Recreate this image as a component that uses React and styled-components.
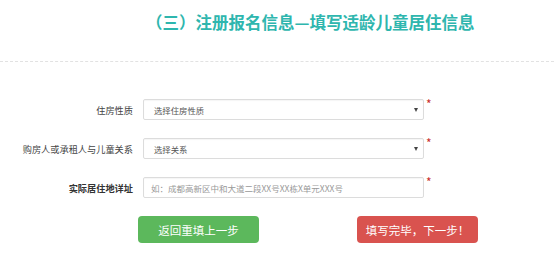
import React from 'react'
import styled, { createGlobalStyle } from 'styled-components'

const GlobalStyle = createGlobalStyle`
    body {
        margin: 0;
        background: #ffffff;
        font-family: "Noto Sans CJK SC", "Noto Sans", sans-serif;
    }
`

const rows = [
    { label: '住房性质', kind: 'select', value: '选择住房性质' },
    { label: '购房人或承租人与儿童关系', kind: 'select', value: '选择关系' },
    { label: '实际居住地详址', kind: 'input', value: '如：成都高新区中和大道二段XX号XX栋X单元XXX号', bold: true },
]

const App = () => {
    return (
        <Page>
            <GlobalStyle />
            <Header>
                <Title>（三）注册报名信息—填写适龄儿童居住信息</Title>
            </Header>
            <Form>
                {rows.map((row) => (
                    <Row key={row.label}>
                        <Label bold={row.bold}>{row.label}</Label>
                        {row.kind === 'select' ? (
                            <Select>
                                <span>{row.value}</span>
                                <Caret />
                            </Select>
                        ) : (
                            <Input placeholder={row.value} />
                        )}
                        <Required>*</Required>
                    </Row>
                ))}
                <Buttons>
                    <Button color="#5cb85c">返回重填上一步</Button>
                    <Button color="#d9534f">填写完毕，下一步！</Button>
                </Buttons>
            </Form>
        </Page>
    )
}

export default App

const Page = styled.div`
    width: 554px;
    height: 256px;
    overflow: hidden;
`
const Header = styled.div`
    height: 62px;
    box-sizing: border-box;
    padding: 10px 0 0 146px;
    border-bottom: 1px dashed #e2e2e2;
`
const Title = styled.h1`
    margin: 0;
    font-size: 16.5px;
    line-height: 24px;
    font-weight: bold;
    color: #2eb6ae;
    white-space: nowrap;
`
const Form = styled.div`
    padding-top: 37px;
    display: flex;
    flex-direction: column;
    gap: 18px;
`
const Row = styled.div`
    display: grid;
    grid-template-columns: 133px 281px auto;
    column-gap: 10px;
    align-items: center;
    height: 21px;
`
const Label = styled.div`
    text-align: right;
    font-size: 9.2px;
    color: ${props => props.bold ? '#333' : '#444'};
    font-weight: ${props => props.bold ? 'bold' : 'normal'};
    white-space: nowrap;
`
const Select = styled.div`
    height: 21px;
    box-sizing: border-box;
    border: 1px solid #dcdcdc;
    border-radius: 2px;
    display: flex;
    align-items: center;
    justify-content: space-between;
    padding: 0 5px 0 10px;
    font-size: 8.4px;
    color: #555;
    box-shadow: inset 0 1px 1px rgba(0, 0, 0, 0.04);
`
const Caret = styled.span`
    width: 0;
    height: 0;
    border-left: 2.5px solid transparent;
    border-right: 2.5px solid transparent;
    border-top: 4px solid #444;
    margin-top: 1px;
`
const Input = styled.input`
    height: 21px;
    box-sizing: border-box;
    border: 1px solid #dcdcdc;
    border-radius: 2px;
    padding: 0 7px;
    font-family: inherit;
    font-size: 8.5px;
    outline: none;
    box-shadow: inset 0 1px 1px rgba(0, 0, 0, 0.04);

    &::placeholder {
        color: #999;
    }
`
const Required = styled.span`
    margin-left: -8px;
    align-self: start;
    margin-top: -1px;
    font-size: 12px;
    line-height: 12px;
    color: #c9302c;
`
const Buttons = styled.div`
    display: flex;
    gap: 98px;
    padding-left: 138px;
`
const Button = styled.button`
    width: 121px;
    height: 27px;
    border: none;
    border-radius: 4px;
    background-color: ${props => props.color};
    color: #ffffff;
    font-family: inherit;
    font-size: 11.5px;
    cursor: pointer;
`
